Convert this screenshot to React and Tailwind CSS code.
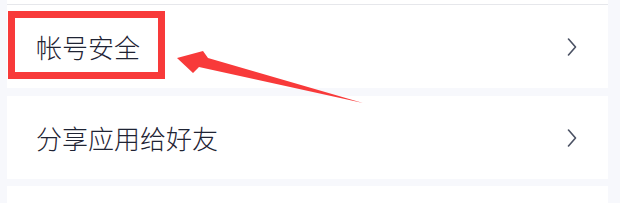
import React from "react";

function Chevron() {
  return (
    <svg width="12" height="18" viewBox="0 0 12 18" fill="none">
      <path d="M2.5 1 L9.5 9 L2.5 17" stroke="#4a5163" strokeWidth="1.6" strokeLinecap="round" strokeLinejoin="round" />
    </svg>
  );
}

function Row({ label, className = "" }) {
  return (
    <div className={`flex h-[83px] items-center justify-between bg-white pl-[29px] pr-[30px] ${className}`}>
      <span className="text-[26px] font-light leading-none text-[#1f2434]">{label}</span>
      <Chevron />
    </div>
  );
}

export default function App() {
  return (
    <div
      className="relative h-[203px] w-[620px] overflow-hidden bg-[#f7f8fc] pl-[7px] pr-[12px]"
      style={{ fontFamily: '"Noto Sans CJK SC", "Noto Sans", sans-serif' }}
    >
      <div className="h-[5px] border-b border-[#e6e7eb] bg-white" />
      <Row label="帐号安全" />
      <Row label="分享应用给好友" className="mt-[8px]" />
      <div className="mt-[7px] h-[40px] bg-white" />

      <div className="absolute left-[8px] top-[11px] h-[68px] w-[157px] border-[7px] border-[#f83a3a]" />
      <svg className="absolute left-0 top-0" width="620" height="203" viewBox="0 0 620 203">
        <polygon
          points="177,58 203,51 208,58 363,103 199,67 193,73"
          fill="#f83a3a"
        />
      </svg>
    </div>
  );
}
